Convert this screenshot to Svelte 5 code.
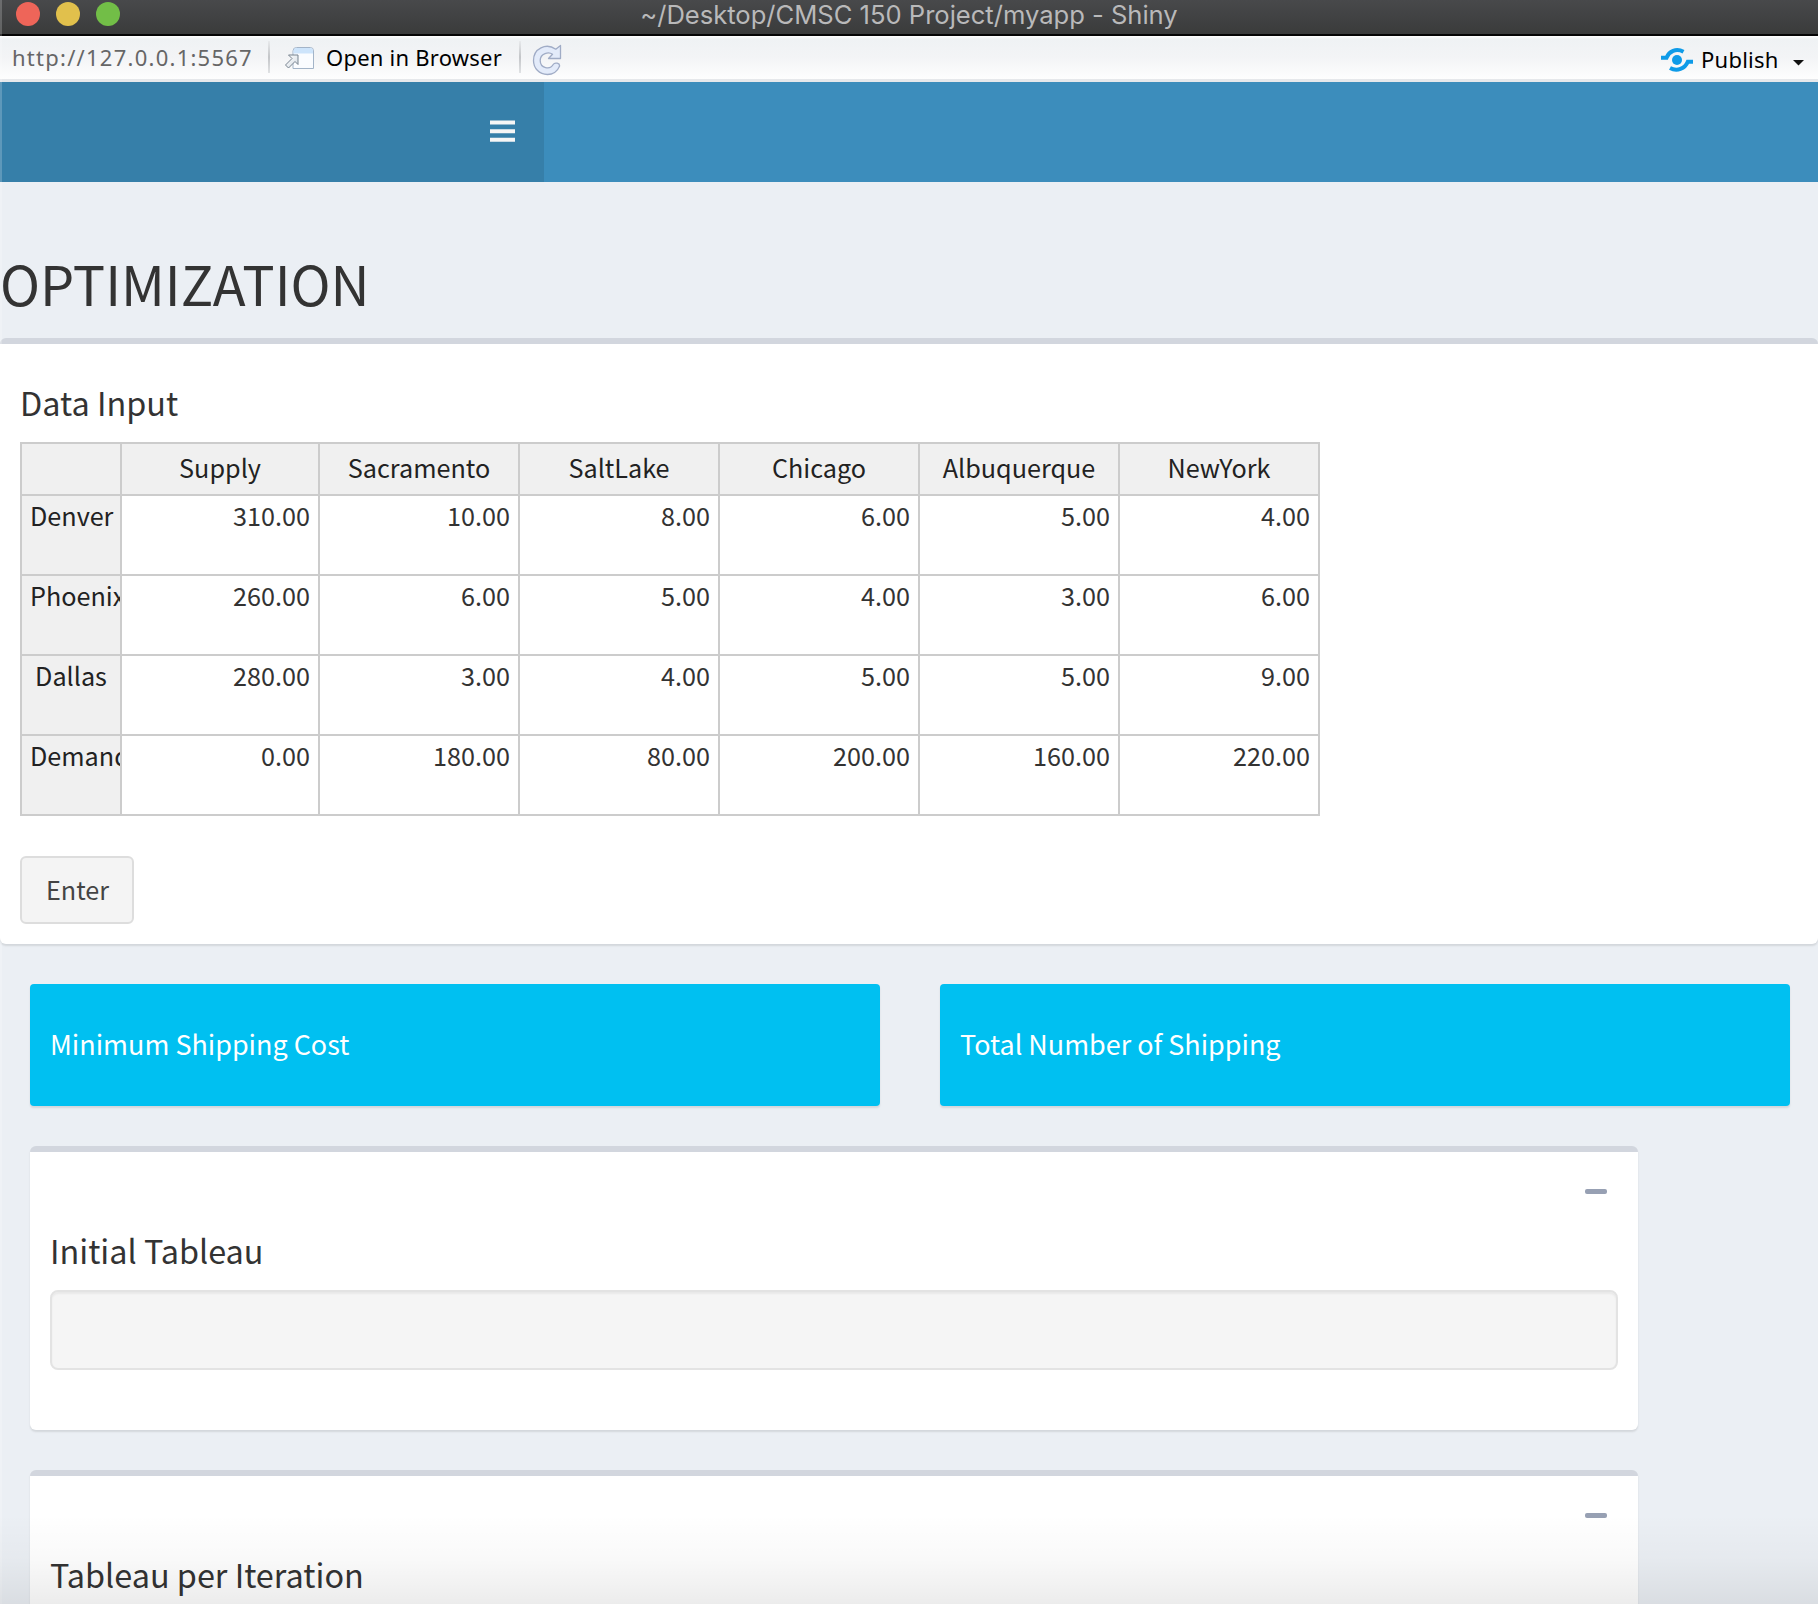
<script>
  const columns = ['Supply', 'Sacramento', 'SaltLake', 'Chicago', 'Albuquerque', 'NewYork'];
  const rows = [
    { name: 'Denver', values: [310, 10, 8, 6, 5, 4] },
    { name: 'Phoenix', values: [260, 6, 5, 4, 3, 6] },
    { name: 'Dallas', values: [280, 3, 4, 5, 5, 9] },
    { name: 'Demand', values: [0, 180, 80, 200, 160, 220] }
  ];
  const totals = ['Minimum Shipping Cost', 'Total Number of Shipping'];
  const tableaus = ['Initial Tableau', 'Tableau per Iteration'];
</script>

<div class="window">
  <header class="titlebar">
    <div class="lights">
      <span class="light red"></span>
      <span class="light yellow"></span>
      <span class="light green"></span>
    </div>
    <span class="title">~/Desktop/CMSC 150 Project/myapp - Shiny</span>
  </header>

  <div class="toolbar">
    <span class="url">http://127.0.0.1:5567</span>
    <span class="divider"></span>
    <button class="tool open">
      <svg width="31" height="26" viewBox="0 0 31 26">
        <defs>
          <linearGradient id="arrow" x1="0" y1="0" x2="1" y2="1">
            <stop offset="0" stop-color="#fff" />
            <stop offset="1" stop-color="#d3dbe3" />
          </linearGradient>
        </defs>
        <path d="M9 22.5V5q0-3.500 3.500-3.500h14Q29.500 1.500 29.500 5v17.500z" fill="#fafcff" stroke="#a3b4c8" />
        <path d="M9.500 7.500V5q0-3 3-3h13.500Q29 2 29 5v2.500z" fill="#cde4fb" />
        <path d="M4.500 9h9.500v9.500l-3-3-6.500 6.500-3-3L8 12.500z" fill="url(#arrow)" stroke="#77838f" stroke-linejoin="round" />
      </svg>
      <span class="open-label">Open in Browser</span>
    </button>
    <span class="divider"></span>
    <svg class="refresh" width="30" height="32" viewBox="0 0 30 32">
      <path
        d="M23.800 5.200 28.500 1.500V14.500H16.500l4-4.200C17 7.500 8.200 9 8.200 16.500c0 8 10 9.500 13 4 1.500-2.500 7-1.500 6.300 1.800C25.500 27.500 20.500 30.500 15.500 30.500 7 30.500 1.500 24 1.500 16.500 1.500 4.500 14-1.500 23.800 5.200z"
        fill="#e3ebfa" stroke="#a0acc6" stroke-width="1.300" stroke-linejoin="round" />
    </svg>
    <button class="tool publish">
      <svg width="32" height="26" viewBox="0 0 32 26">
        <circle cx="16" cy="13" r="5" fill="#0e9be8" />
        <path d="M0 10.800h5.500C8 4.500 15 .8 22.500 4.800M32 14.800h-5.200C24 21.700 16 24.800 9 21" fill="none" stroke="#0e9be8" stroke-width="4" />
      </svg>
      <span class="publish-label">Publish</span>
      <svg class="caret" width="11" height="6" viewBox="0 0 11 6"><path d="M0 0h11L5.500 5.500z" fill="#111" /></svg>
    </button>
  </div>

  <nav class="navbar">
    <div class="brand">
      <svg width="25" height="22" viewBox="0 0 25 22">
        <path d="M0 .5h25v4H0zM0 9.200h25v4H0zM0 17.800h25v4H0z" fill="#f6f6f6" />
      </svg>
    </div>
  </nav>

  <main>
    <h1>OPTIMIZATION</h1>

    <section class="box input-box">
      <h3>Data Input</h3>
      <table>
        <colgroup>
          <col class="names" />
          <col class="first" />
          <col span="5" class="rest" />
        </colgroup>
        <thead>
          <tr>
            <th></th>
            {#each columns as column}<th>{column}</th>{/each}
          </tr>
        </thead>
        <tbody>
          {#each rows as row}
            <tr>
              <th><div class="row-name">{row.name}</div></th>
              {#each row.values as value}<td>{value.toFixed(2)}</td>{/each}
            </tr>
          {/each}
        </tbody>
      </table>
      <button class="enter">Enter</button>
    </section>

    <div class="totals">
      {#each totals as total}<div class="total">{total}</div>{/each}
    </div>

    {#each tableaus as tableau}
      <section class="box tableau">
        <div class="tools"><span class="minus"></span></div>
        <h3>{tableau}</h3>
        <div class="well"></div>
      </section>
    {/each}
  </main>
  <div class="edge"></div>
  <div class="shade"></div>
</div>

<style>
  :global(body) {
    margin: 0;
    background: #ebeff4;
  }
  * {
    box-sizing: border-box;
  }
  .window {
    position: relative;
    display: flex;
    flex-direction: column;
    width: 1818px;
    height: 1604px;
    overflow: hidden;
    background: #ebeff4;
    color: #333;
    font-family: 'Noto Sans CJK JP', 'Noto Sans', sans-serif;
    font-size: 25.2px;
  }
  .titlebar {
    flex: none;
    display: grid;
    grid-template-columns: 1fr auto 1fr;
    height: 36px;
    background: linear-gradient(#48494b, #3a3b3b);
    border-bottom: 2px solid #050505;
  }
  .lights {
    display: flex;
    gap: 16px;
    padding: 2px 0 0 16px;
  }
  .light {
    width: 24px;
    height: 24px;
    border-radius: 50%;
  }
  .red { background: #ee6559; }
  .yellow { background: #e1c04c; }
  .green { background: #72be47; }
  .title {
    color: #b9b9ba;
    font: 25.600px/30px Inter, sans-serif;
    letter-spacing: -0.02px;
    white-space: pre;
  }
  .toolbar {
    flex: none;
    display: flex;
    align-items: flex-start;
    height: 46px;
    padding-left: 12px;
    border-bottom: 3px solid #e6e8eb;
    background: linear-gradient(#fff, #eff2f4 3px, #f3f4f6 50%, #fefefe);
    font: 22px/42px 'Noto Sans', sans-serif;
    color: #000;
  }
  .url {
    width: 256px;
    color: #666;
    letter-spacing: 1.25px;
  }
  .divider {
    width: 2px;
    height: 32px;
    margin-top: 5px;
    background: linear-gradient(#e8eaec, #c3c5c8 50%, #e0e2e4);
  }
  .tool {
    display: flex;
    padding: 0;
    border: 0;
    background: none;
    color: inherit;
    font: inherit;
  }
  .open {
    width: 235px;
    margin-left: 14px;
  }
  .open svg {
    margin: 10px 11px 0 0;
  }
  .open-label {
    letter-spacing: 0.23px;
    white-space: nowrap;
  }
  .refresh {
    margin: 8px 0 0 11px;
  }
  .publish {
    margin: 1px 14px 0 auto;
    line-height: 44px;
  }
  .publish-label {
    width: 75px;
    letter-spacing: 0.25px;
  }
  .publish svg {
    margin: 10px 8px 0 0;
  }
  .publish .caret {
    margin: 23px 0 0 17px;
  }
  .navbar {
    flex: none;
    height: 100px;
    background: #3c8dbc;
  }
  .brand {
    display: flex;
    justify-content: flex-end;
    width: 544px;
    height: 100px;
    padding: 38px 29px 0 0;
    background: #367fa9;
  }
  main {
    flex: none;
  }
  h1 {
    margin: 0;
    padding-top: 68px;
    height: 156px;
    font-size: 54px;
    font-weight: 400;
    line-height: 66px;
  }
  h3 {
    margin: 0;
    font-size: 32.400px;
    font-weight: 400;
    line-height: 40px;
  }
  .box {
    background: #fff;
    border-top: 6px solid #d2d6de;
    border-radius: 6px;
    box-shadow: 0 2px 2px rgba(0, 0, 0, 0.1);
  }
  .input-box {
    height: 606px;
    padding: 38px 20px 0;
  }
  table {
    width: 1300px;
    margin-top: 20px;
    border-collapse: separate;
    border-spacing: 0;
    border-top: 2px solid #ccc;
    border-left: 2px solid #ccc;
    table-layout: fixed;
  }
  .names { width: 100px; }
  .first { width: 198px; }
  .rest { width: 200px; }
  th,
  td {
    height: 80px;
    padding: 0 8px;
    border-right: 2px solid #ccc;
    border-bottom: 2px solid #ccc;
    line-height: 38px;
    vertical-align: top;
    font-weight: 400;
  }
  th {
    background: #f0f0f0;
    color: #222;
    text-align: center;
  }
  thead th {
    height: 52px;
    line-height: 46px;
  }
  td {
    text-align: right;
  }
  tbody th {
    padding: 0;
  }
  .row-name {
    overflow: hidden;
    padding: 0 8px;
    white-space: nowrap;
  }
  .enter {
    display: block;
    width: 114px;
    height: 68px;
    margin-top: 40px;
    padding: 0 0 1px 1px;
    border: 2px solid #ddd;
    border-radius: 6px;
    background: #f4f4f4;
    color: #444;
    font: inherit;
    line-height: 63px;
  }
  .totals {
    display: grid;
    grid-template-columns: 850px 850px;
    gap: 60px;
    padding: 40px 30px;
  }
  .total {
    height: 122px;
    padding-left: 20px;
    border-radius: 4px;
    background: #00c0f1;
    box-shadow: 0 2px 2px rgba(0, 0, 0, 0.1);
    color: #fff;
    font-size: 26.950px;
    line-height: 120px;
  }
  .tableau {
    width: 1608px;
    height: 284px;
    margin: 0 0 40px 30px;
    padding: 0 20px;
  }
  .tools {
    display: flex;
    justify-content: flex-end;
    height: 78px;
    padding: 37px 11px 0 0;
  }
  .minus {
    width: 22px;
    height: 5px;
    border-radius: 2px;
    background: #97a0b3;
  }
  .well {
    height: 80px;
    margin-top: 20px;
    border: 2px solid #e3e3e3;
    border-radius: 8px;
    background: #f5f5f5;
    box-shadow: inset 0 2px 2px rgba(0, 0, 0, 0.05);
  }
  /* light window rim along the left side */
  .edge {
    position: absolute;
    inset: 0 auto 0 0;
    width: 2px;
    background: rgba(255, 255, 255, 0.2);
  }
  /* window fades toward its bottom edge */
  .shade {
    position: absolute;
    inset: auto 0 0 0;
    height: 90px;
    background: linear-gradient(rgba(0, 0, 0, 0), rgba(0, 0, 0, 0.022) 50%, rgba(0, 0, 0, 0.075));
  }
</style>
